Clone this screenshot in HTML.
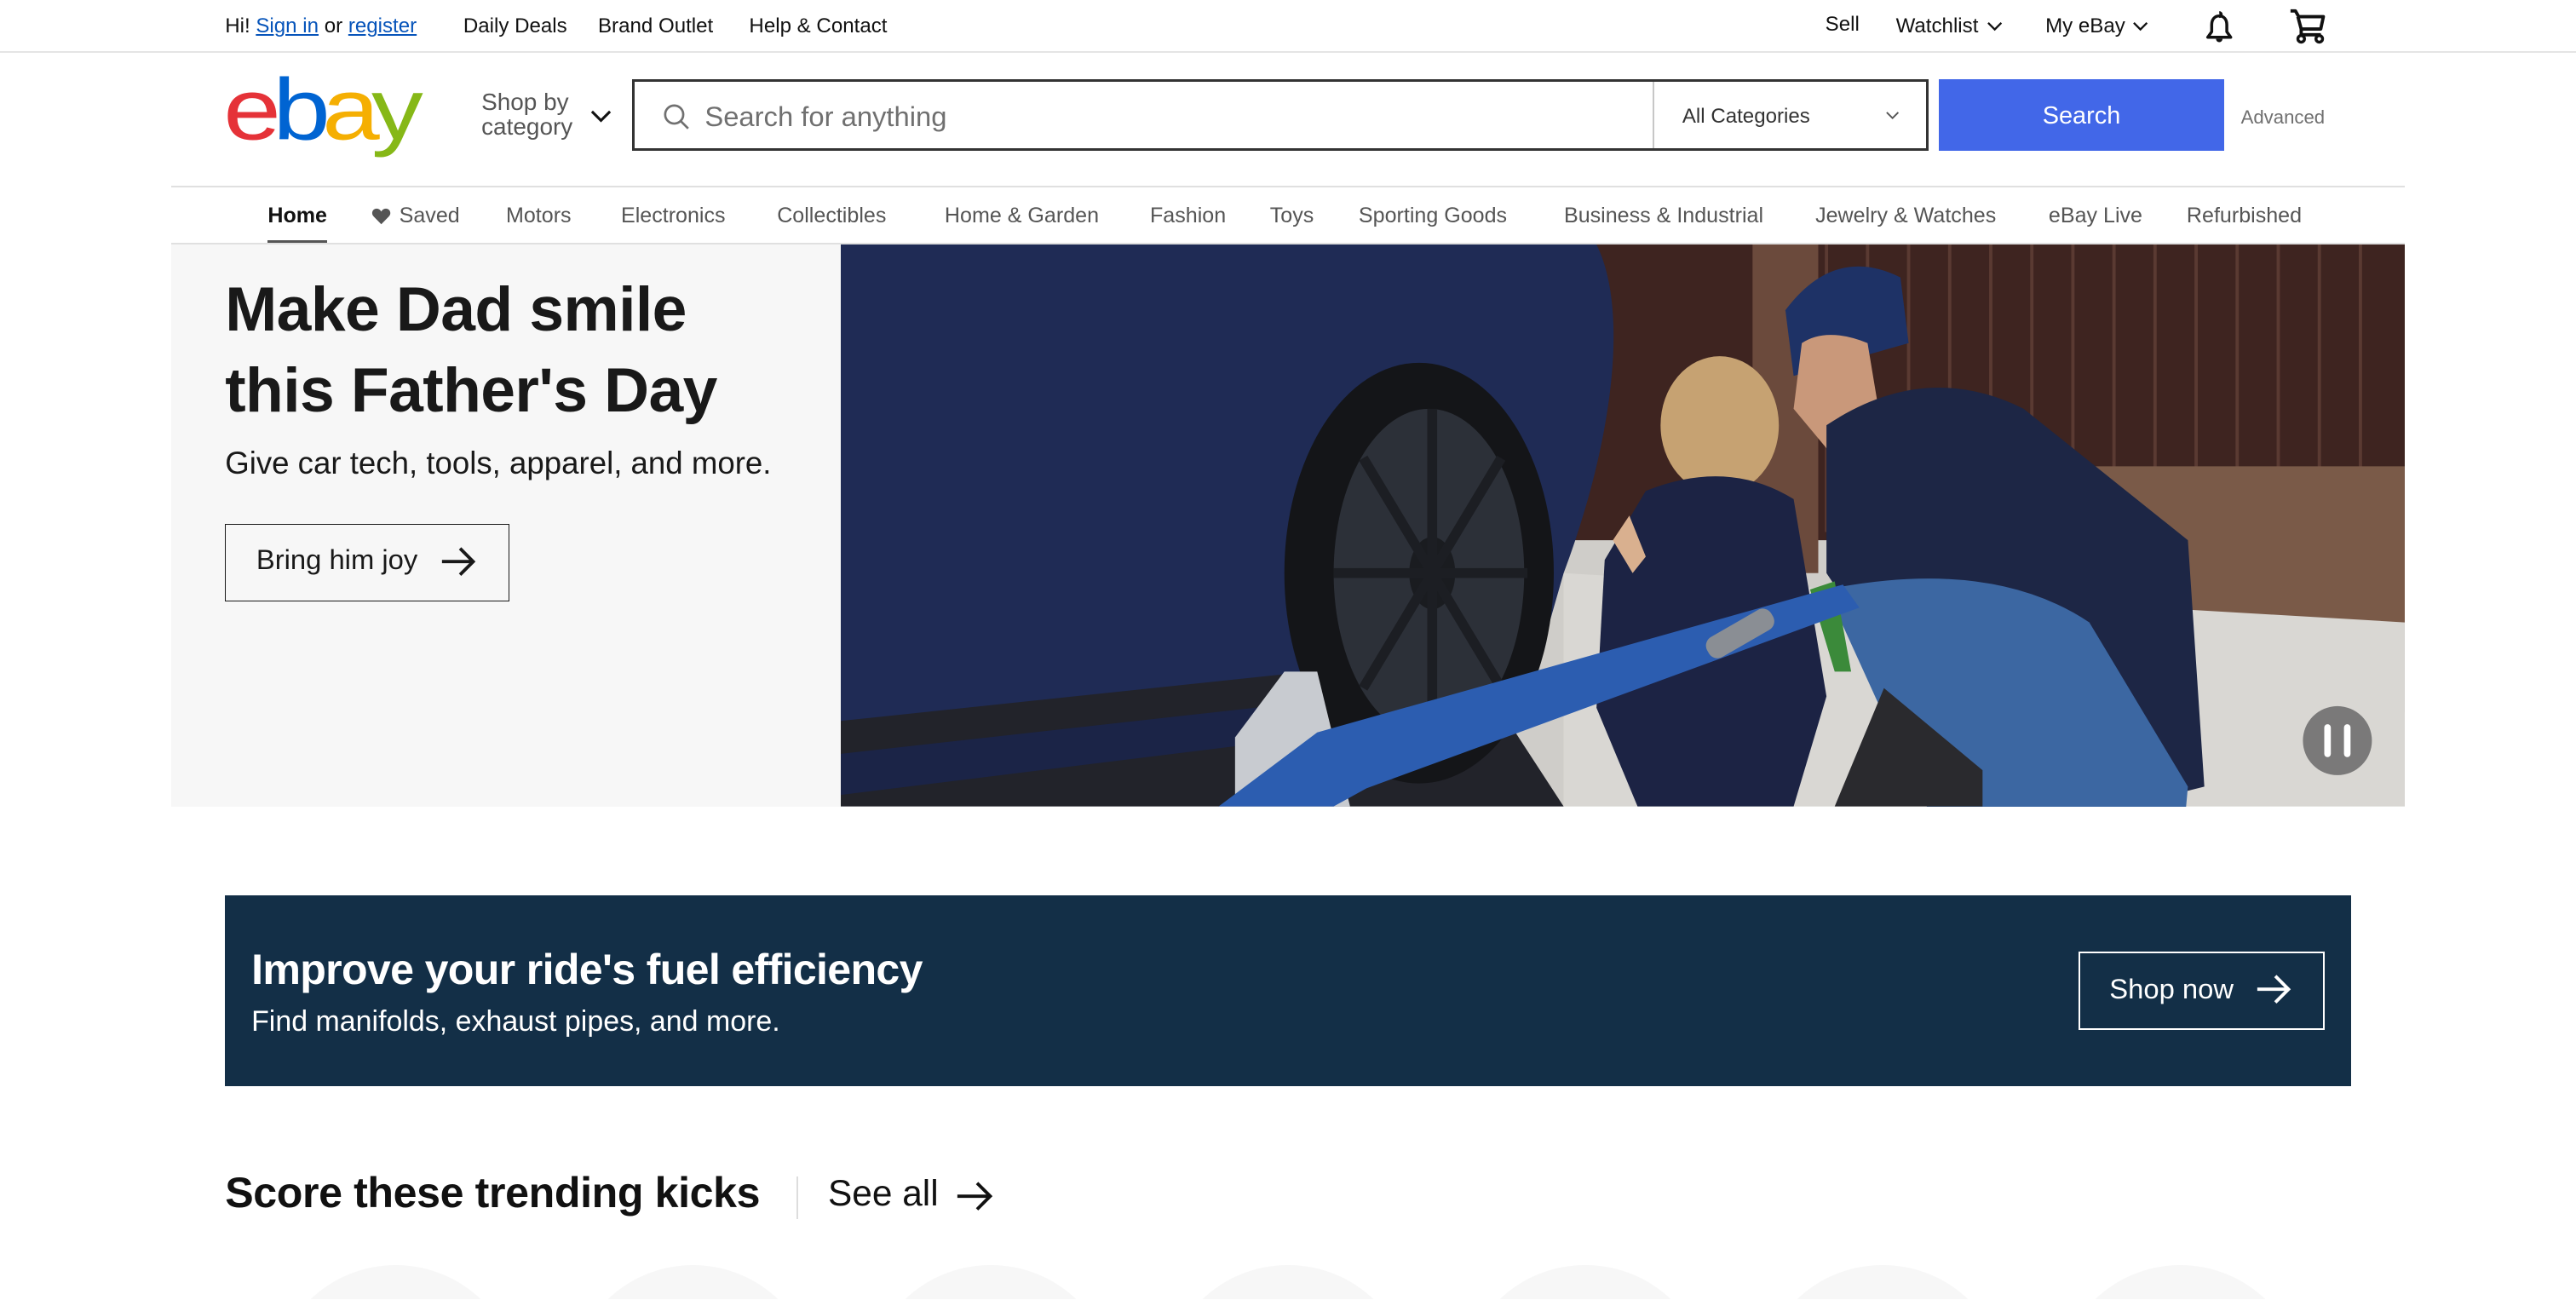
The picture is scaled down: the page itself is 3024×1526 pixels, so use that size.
<!DOCTYPE html>
<html><head><meta charset="utf-8">
<style>
html{zoom:1.92857;overflow:hidden;height:791px}
*{margin:0;padding:0;box-sizing:border-box}
body{width:1568px;height:791px;overflow:hidden;background:#fff;font-family:"Liberation Sans",Arial,sans-serif;color:#111;position:relative}
.a{position:absolute;white-space:nowrap}
.top{font-size:12.5px;top:9px}
.nav{font-size:13px;color:#555;top:124px}
a{color:#0654ba}
.c{position:absolute;top:0;width:150px;height:150px;border-radius:50%;background:#f7f7f7}
</style></head><body>
<div class="a top" style="left:137px">Hi! <a style="text-decoration:underline">Sign in</a> or <a style="text-decoration:underline">register</a></div>
<div class="a top" style="left:282px">Daily Deals</div>
<div class="a top" style="left:364px">Brand Outlet</div>
<div class="a top" style="left:456px">Help &amp; Contact</div>
<div class="a top" style="left:1111px;top:8px">Sell</div>
<div class="a top" style="left:1154px">Watchlist</div>
<svg class="a" style="left:1209px;top:12px" width="10" height="8" viewBox="0 0 10 8"><path d="M1 2l4 4 4-4" fill="none" stroke="#111" stroke-width="1.2"/></svg>
<div class="a top" style="left:1245px">My eBay</div>
<svg class="a" style="left:1298px;top:12px" width="10" height="8" viewBox="0 0 10 8"><path d="M1 2l4 4 4-4" fill="none" stroke="#111" stroke-width="1.2"/></svg>
<svg class="a" style="left:1340px;top:5px" width="22" height="22" viewBox="0 0 22 22"><path d="M11 2.5a1.2 1.2 0 0 1 0 2.4M11 4.5c-3 0-4.6 2.4-4.6 5.4v4.2L4 17.5h14l-2.4-3.4V9.9c0-3-1.6-5.4-4.6-5.4z" fill="none" stroke="#111" stroke-width="1.8" stroke-linejoin="round"/><path d="M9 18.5a2 2 0 0 0 4 0z" fill="#111"/></svg>
<svg class="a" style="left:1392px;top:4px" width="26" height="24" viewBox="0 0 26 24"><path d="M2 2.5h3l2 3.5M6.5 6h15.5l-1.6 7.5H8.5L6.5 6" fill="none" stroke="#111" stroke-width="2" stroke-linejoin="round"/><path d="M8.5 13.5V17h12" fill="none" stroke="#111" stroke-width="2"/><circle cx="8.5" cy="19.5" r="2" fill="#fff" stroke="#111" stroke-width="1.8"/><circle cx="19.5" cy="19.5" r="2" fill="#fff" stroke="#111" stroke-width="1.8"/></svg>
<div class="a" style="left:0;top:31px;width:1568px;height:1px;background:#e5e5e5"></div>
<div class="a" style="left:136px;top:30px;font-size:63px;letter-spacing:-5px;line-height:1;transform:scaleY(0.84);transform-origin:0 100%;height:64px"><span style="color:#e53238">e</span><span style="color:#0064d2">b</span><span style="color:#f5af02">a</span><span style="color:#86b817">y</span></div>
<div class="a" style="left:293px;top:55px;font-size:14.5px;line-height:15px;color:#555">Shop by<br>category</div>
<svg class="a" style="left:359px;top:66px" width="14" height="10" viewBox="0 0 14 10"><path d="M1.5 2l5.5 5.5 5.5-5.5" fill="none" stroke="#111" stroke-width="1.6"/></svg>
<div class="a" style="left:385px;top:48px;width:789px;height:44px;border:2px solid #333;background:#fff"></div>
<svg class="a" style="left:403px;top:62px" width="18" height="18" viewBox="0 0 18 18"><circle cx="7.5" cy="7.5" r="5.5" fill="none" stroke="#707070" stroke-width="1.4"/><path d="M11.5 11.5l4.5 4.5" stroke="#707070" stroke-width="1.4"/></svg>
<div class="a" style="left:429px;top:61px;font-size:17px;color:#707070">Search for anything</div>
<div class="a" style="left:1006px;top:50px;width:1px;height:40px;background:#c7c7c7"></div>
<div class="a" style="left:1024px;top:64px;font-size:12.5px;color:#333">All Categories</div>
<svg class="a" style="left:1147px;top:67px" width="10" height="7" viewBox="0 0 10 7"><path d="M1.5 1.5l3.5 3.5 3.5-3.5" fill="none" stroke="#555" stroke-width="1"/></svg>
<div class="a" style="left:1180px;top:48px;width:174px;height:44px;background:#4267e8;color:#fff;font-size:15px;text-align:center;line-height:45px">Search</div>
<div class="a" style="left:1364px;top:65px;font-size:11.5px;color:#707070">Advanced</div>
<div class="a" style="left:104px;top:113px;width:1360px;height:1px;background:#e0e0e0"></div>
<div class="a nav" style="left:163px;color:#111;font-weight:bold">Home</div>
<div class="a" style="left:163px;top:146px;width:36px;height:3px;background:#555"></div>
<svg class="a" style="left:226px;top:126px" width="12" height="11" viewBox="0 0 12 11"><path d="M6 10.5L1.2 5.6C-.3 4 .6 1 3.2 1 4.5 1 5.4 1.8 6 2.8 6.6 1.8 7.5 1 8.8 1c2.6 0 3.5 3 2 4.6z" fill="#555"/></svg>
<div class="a nav" style="left:243px">Saved</div>
<div class="a nav" style="left:308px">Motors</div>
<div class="a nav" style="left:378px">Electronics</div>
<div class="a nav" style="left:473px">Collectibles</div>
<div class="a nav" style="left:575px">Home &amp; Garden</div>
<div class="a nav" style="left:700px">Fashion</div>
<div class="a nav" style="left:773px">Toys</div>
<div class="a nav" style="left:827px">Sporting Goods</div>
<div class="a nav" style="left:952px">Business &amp; Industrial</div>
<div class="a nav" style="left:1105px">Jewelry &amp; Watches</div>
<div class="a nav" style="left:1247px">eBay Live</div>
<div class="a nav" style="left:1331px">Refurbished</div>
<div class="a" style="left:104px;top:148px;width:1360px;height:1px;background:#e0e0e0"></div>
<div class="a" style="left:104px;top:149px;width:408px;height:342px;background:#f7f7f7"></div>
<div class="a" style="left:137px;top:164px;font-size:38px;font-weight:bold;line-height:49px;letter-spacing:-0.3px;color:#191919">Make Dad smile<br>this Father's Day</div>
<div class="a" style="left:137px;top:271px;font-size:19px;color:#191919">Give car tech, tools, apparel, and more.</div>
<div class="a" style="left:137px;top:319px;width:173px;height:47px;border:1px solid #191919"></div>
<div class="a" style="left:156px;top:331px;font-size:17px;color:#191919">Bring him joy</div>
<svg class="a" style="left:267px;top:331px" width="24" height="22" viewBox="0 0 24 22"><path d="M2 11h19M13 3l8 8-8 8" fill="none" stroke="#191919" stroke-width="2"/></svg>
<svg class="a" style="left:512px;top:149px" width="952" height="342" viewBox="0 0 952 342">
<rect width="952" height="342" fill="#cfcdc9"/>
<rect x="440" y="0" width="512" height="180" fill="#3e2420"/>
<g stroke="#5a3a32" stroke-width="2">
<path d="M600 0v175M625 0v175M650 0v175M675 0v175M700 0v175M725 0v175M750 0v175M775 0v175M800 0v175M825 0v175M850 0v175M875 0v175M900 0v175M925 0v175"/></g>
<rect x="555" y="0" width="40" height="200" fill="#6b4a3c"/>
<path d="M760 135h192v150l-40 -20 -150 -40z" fill="#7a5a48"/>
<path d="M440 200 L952 230 L952 342 L440 342z" fill="#d9d7d3"/>
<path d="M0 0h460c20 40 10 120 -20 200 l-20 70 -60 20 L0 310z" fill="#1f2b55"/>
<path d="M0 290 L380 250 L440 342 H0z" fill="#22232a"/>
<path d="M0 310 L360 270 L365 290 L0 335z" fill="#1b2447"/>
<ellipse cx="352" cy="200" rx="82" ry="128" fill="#141518"/>
<ellipse cx="358" cy="200" rx="58" ry="100" fill="#2c3038"/>
<ellipse cx="360" cy="200" rx="14" ry="22" fill="#1a1c20"/>
<path d="M360 100v200M300 200h118M318 130l84 140M318 270l84-140" stroke="#1c1e23" stroke-width="6"/>
<path d="M575 40 q30 -40 70 -20 l5 40 -70 20z" fill="#1e3266"/>
<path d="M585 60 q15 -10 40 0 l10 60 -30 10 -25 -30z" fill="#c9987a"/>
<path d="M600 110 q60 -40 120 -10 l100 80 10 150 -40 10 -60 -60 -90 -20 -40 -60z" fill="#1d2645"/>
<path d="M600 210 q100 -20 160 20 l60 100 -10 110 -60 0 -70 -60 -30 -60z" fill="#3c67a2"/>
<path d="M635 270 l60 50 0 22 -90 0z" fill="#2a2a2e"/>
<path d="M590 210 l15 50 10 0 -10 -55z" fill="#3b8a3a"/>
<ellipse cx="535" cy="110" rx="36" ry="42" fill="#c6a272"/>
<path d="M490 150 q50 -20 90 5 l20 120 -20 67 -95 0 -25 -60 5 -90z" fill="#1c2344"/>
<path d="M470 180 l12 20 8 -10 -10 -25z" fill="#d9b08f"/>
<path d="M240 300 l30 -40 20 0 20 82 -70 0z" fill="#c8cbd0"/>
<path d="M230 342 l60 -45 320 -90 10 14 -300 110 -20 11z" fill="#2c5db0"/>
<rect x="525" y="230" width="45" height="14" rx="6" transform="rotate(-30 547 237)" fill="#8a8e94"/>
<circle cx="911" cy="302" r="21" fill="#6f6f6f" opacity=".9"/>
<rect x="903" y="292" width="4" height="20" rx="2" fill="#fff"/><rect x="915" y="292" width="4" height="20" rx="2" fill="#fff"/>
</svg>
<div class="a" style="left:137px;top:545px;width:1294px;height:116px;background:#132f47"></div>
<div class="a" style="left:153px;top:575px;font-size:26px;font-weight:bold;color:#fff;letter-spacing:-0.35px">Improve your ride's fuel efficiency</div>
<div class="a" style="left:153px;top:612px;font-size:17.6px;color:#fff">Find manifolds, exhaust pipes, and more.</div>
<div class="a" style="left:1265px;top:579px;width:150px;height:48px;border:1.5px solid #fff"></div>
<div class="a" style="left:1284px;top:592px;font-size:17px;color:#fff">Shop now</div>
<svg class="a" style="left:1372px;top:591px" width="24" height="22" viewBox="0 0 24 22"><path d="M2 11h19M13 3l8 8-8 8" fill="none" stroke="#fff" stroke-width="2"/></svg>
<div class="a" style="left:137px;top:711px;font-size:26px;font-weight:bold;color:#111;letter-spacing:-0.2px">Score these trending kicks</div>
<div class="a" style="left:485px;top:716px;width:1px;height:26px;background:#ddd"></div>
<div class="a" style="left:504px;top:714px;font-size:22px;color:#111">See all</div>
<svg class="a" style="left:581px;top:716px" width="26" height="24" viewBox="0 0 26 24"><path d="M2 12h20M14 4l8 8-8 8" fill="none" stroke="#111" stroke-width="2"/></svg>
<div class="a" style="left:0;top:770px;width:1568px;height:21px;overflow:hidden">
<div class="c" style="left:166px"></div><div class="c" style="left:347px"></div><div class="c" style="left:528px"></div><div class="c" style="left:709px"></div><div class="c" style="left:890px"></div><div class="c" style="left:1071px"></div><div class="c" style="left:1252px"></div>
</div>
</body></html>
